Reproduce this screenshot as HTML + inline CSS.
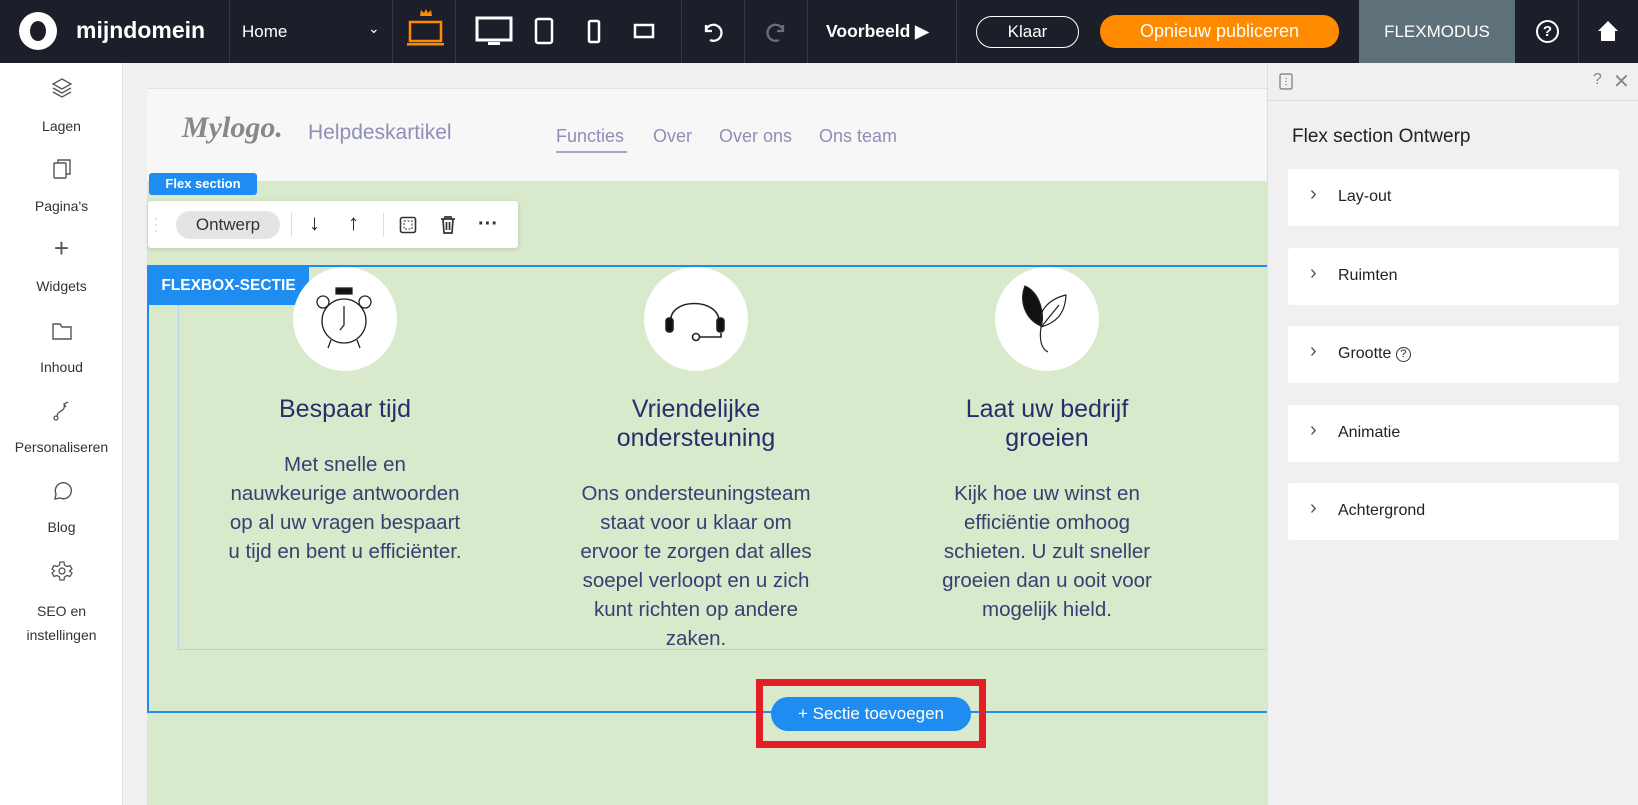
<!DOCTYPE html>
<html><head><meta charset="utf-8"><style>
*{box-sizing:border-box;margin:0;padding:0}
body{width:1638px;height:805px;overflow:hidden;font-family:"Liberation Sans",sans-serif;background:#f1f1f1;position:relative}
.abs{position:absolute}
#top{left:0;top:0;width:1638px;height:63px;background:#1c1f29;color:#fff}
.div{position:absolute;top:0;width:1px;height:63px;background:#333846}
#side{left:0;top:63px;width:123px;height:742px;background:#fff;border-right:1px solid #e2e2e2}
.si{position:absolute;width:123px;text-align:center;font-size:14px;color:#333}
.page{left:147px;top:88px;width:1120px;height:717px;background:#d8e9cc}
.hdr{left:147px;top:88px;width:1120px;height:93px;background:#f7f7f7;border-top:1px solid #e4e4e4}
.nav{font-size:18px;color:#8e8eb8}
.col{position:absolute;width:300px;text-align:center;color:#2b2f6e}
.col h2{font-weight:normal;font-size:25px;line-height:29px;color:#282d6b}
.col p{font-size:20.5px;line-height:29px;color:#3a3e70;margin-top:26px}
.circ{position:absolute;width:104px;height:104px;border-radius:50%;background:#fff;top:267px}
#panel{left:1267px;top:63px;width:371px;height:742px;background:#f0f0f0;border-left:1px solid #ddd}
.card{position:absolute;left:20px;width:331px;height:57px;background:#fff;border-radius:3px;font-size:16px;color:#222;padding:19px 0 0 50px}
.card:before{content:"›";position:absolute;left:22px;top:14px;font-size:20px;color:#555}
</style></head><body>
<div id="top" class="abs">
 <div class="abs" style="left:19px;top:12px;width:38px;height:38px;border-radius:50%;background:#fff"></div>
 <div class="abs" style="left:30px;top:21px;width:16px;height:20px;border-radius:50%;background:#1c1f29"></div>
 <div class="abs" style="left:76px;top:17px;font-size:23px;font-weight:bold">mijndomein</div>
 <div class="div" style="left:229px"></div>
 <div class="abs" style="left:242px;top:22px;font-size:17px">Home</div>
 <div class="abs" style="left:368px;top:20px;font-size:14px">&#8964;</div>
 <div class="div" style="left:392px"></div>
 <svg class="abs" style="left:405px;top:8px" width="40" height="38" viewBox="0 0 40 38"><path d="M15 8 L16 2 L19 5 L21 1 L23 5 L26 2 L27 8Z" fill="#ff8a00"/><rect x="5" y="14" width="31" height="19" fill="none" stroke="#ff8a00" stroke-width="2.5"/><rect x="2" y="35" width="37" height="2.5" fill="#ff8a00"/></svg>
 <div class="div" style="left:455px"></div>
 <svg class="abs" style="left:475px;top:16px" width="38" height="32"><rect x="2" y="2" width="34" height="22" fill="none" stroke="#fff" stroke-width="3"/><rect x="13" y="26" width="12" height="3" fill="#fff"/></svg>
 <svg class="abs" style="left:534px;top:17px" width="20" height="28"><rect x="2" y="2" width="16" height="24" rx="2" fill="none" stroke="#fff" stroke-width="2.5"/></svg>
 <svg class="abs" style="left:587px;top:19px" width="14" height="26"><rect x="2" y="2" width="10" height="21" rx="1.5" fill="none" stroke="#fff" stroke-width="2.5"/></svg>
 <svg class="abs" style="left:633px;top:23px" width="22" height="16"><rect x="2" y="2" width="18" height="12" fill="none" stroke="#fff" stroke-width="2.5"/></svg>
 <div class="div" style="left:681px"></div>
 <svg class="abs" style="left:700px;top:20px" width="24" height="24" viewBox="0 0 24 24"><path d="M6 5 L6 11 L12 11 M6 10 A8 8 0 1 1 10 20" fill="none" stroke="#fff" stroke-width="2.3"/></svg>
 <div class="div" style="left:744px"></div>
 <svg class="abs" style="left:765px;top:20px" width="24" height="24" viewBox="0 0 24 24"><path d="M18 5 L18 11 L12 11 M18 10 A8 8 0 1 0 14 20" fill="none" stroke="#6b6f78" stroke-width="2.3"/></svg>
 <div class="div" style="left:807px"></div>
 <div class="abs" style="left:826px;top:21px;font-size:17.5px;font-weight:bold">Voorbeeld ▶</div>
 <div class="div" style="left:956px"></div>
 <div class="abs" style="left:976px;top:16px;width:103px;height:32px;border:1.5px solid #fff;border-radius:16px;text-align:center;font-size:17px;line-height:29px">Klaar</div>
 <div class="abs" style="left:1100px;top:15px;width:239px;height:33px;background:#ff8a00;border-radius:16px;text-align:center;font-size:18px;line-height:33px">Opnieuw publiceren</div>
 <div class="abs" style="left:1359px;top:0;width:156px;height:63px;background:#5f7178;text-align:center;font-size:17px;line-height:63px">FLEXMODUS</div>
 <div class="abs" style="left:1536px;top:20px;width:23px;height:23px;border:2px solid #fff;border-radius:50%;text-align:center;font-size:15px;line-height:19px;font-weight:bold">?</div>
 <div class="div" style="left:1578px"></div>
 <svg class="abs" style="left:1597px;top:20px" width="22" height="22"><path d="M11 1 L21 11 L18 11 L18 21 L4 21 L4 11 L1 11Z" fill="#fff"/></svg>
</div>

<div id="side" class="abs">
 <svg class="abs" style="left:51px;top:14px" width="22" height="22" viewBox="0 0 22 22" fill="none" stroke="#555" stroke-width="1.3"><path d="M11 2 L20 7 L11 12 L2 7Z"/><path d="M2 11 L11 16 L20 11"/><path d="M2 15 L11 20 L20 15"/></svg>
 <div class="si" style="top:55px">Lagen</div>
 <svg class="abs" style="left:52px;top:95px" width="20" height="22" fill="none" stroke="#555" stroke-width="1.4"><rect x="2" y="5" width="12" height="15" rx="1"/><path d="M6 5 V2 H18 V16 H14"/></svg>
 <div class="si" style="top:135px">Pagina's</div>
 <div class="si" style="top:170px;font-size:26px;color:#555;font-weight:lighter">+</div>
 <div class="si" style="top:215px">Widgets</div>
 <svg class="abs" style="left:51px;top:258px" width="22" height="20" fill="none" stroke="#555" stroke-width="1.4"><path d="M2 3 H9 L11 6 H20 V18 H2Z"/></svg>
 <div class="si" style="top:296px">Inhoud</div>
 <svg class="abs" style="left:52px;top:336px" width="20" height="22" fill="none" stroke="#555" stroke-width="1.3"><path d="M5 18 C5 10 14 14 12 5 L16 3 M12 5 L14 8"/><circle cx="4" cy="19" r="2"/></svg>
 <div class="si" style="top:376px">Personaliseren</div>
 <svg class="abs" style="left:51px;top:417px" width="22" height="22" fill="none" stroke="#555" stroke-width="1.4"><path d="M4 19 L5 14 A8 8 0 1 1 9 18Z"/></svg>
 <div class="si" style="top:456px">Blog</div>
 <svg class="abs" style="left:51px;top:497px" width="22" height="22" fill="none" stroke="#555" stroke-width="1.3" viewBox="0 0 22 22"><circle cx="11" cy="11" r="3"/><path d="M9 2 H13 L13.5 5 L16 6.5 L19 5.5 L21 9 L18.5 11 L21 13 L19 16.5 L16 15.5 L13.5 17 L13 20 H9 L8.5 17 L6 15.5 L3 16.5 L1 13 L3.5 11 L1 9 L3 5.5 L6 6.5 L8.5 5Z"/></svg>
 <div class="si" style="top:536px;line-height:24px">SEO en<br>instellingen</div>
</div>

<div class="abs page"></div>
<div class="abs hdr">
 <div class="abs" style="left:35px;top:22px;font-family:'Liberation Serif',serif;font-style:italic;font-size:30px;color:#888;font-weight:bold">Mylogo.</div>
 <div class="abs" style="left:161px;top:32px;font-size:21px;color:#8e8eb8">Helpdeskartikel</div>
 <div class="abs nav" style="left:409px;top:37px">Functies</div>
 <div class="abs" style="left:409px;top:62px;width:71px;height:2px;background:#a4a4c8"></div>
 <div class="abs nav" style="left:506px;top:37px">Over</div>
 <div class="abs nav" style="left:572px;top:37px">Over ons</div>
 <div class="abs nav" style="left:672px;top:37px">Ons team</div>
</div>

<div class="abs" style="left:147px;top:265px;width:1121px;height:448px;border:2px solid #1e8cf0;border-right:none"></div>
<div class="abs" style="left:178px;top:266px;width:1090px;height:384px;border-left:1px solid #b6d2ec;border-bottom:1px solid #b6d2ec"></div>

<div class="abs" style="left:149px;top:173px;width:108px;height:22px;background:#1e8cf0;color:#fff;border-radius:3px;font-size:13px;font-weight:bold;line-height:22px;text-align:center">Flex section</div>
<div class="abs" style="left:148px;top:201px;width:370px;height:47px;background:#fff;border-radius:3px;box-shadow:0 1px 4px rgba(0,0,0,.15)">
 <div class="abs" style="left:6px;top:14px;color:#bbb;font-size:12px;line-height:6px">·<br>·<br>·</div>
 <div class="abs" style="left:28px;top:10px;width:104px;height:28px;background:#e2e4e6;border-radius:14px;text-align:center;font-size:17px;line-height:28px;color:#333">Ontwerp</div>
 <div class="abs" style="left:143px;top:12px;width:1px;height:24px;background:#ddd"></div>
 <div class="abs" style="left:161px;top:9px;font-size:22px;color:#222">↓</div>
 <div class="abs" style="left:200px;top:9px;font-size:22px;color:#222">↑</div>
 <div class="abs" style="left:235px;top:12px;width:1px;height:24px;background:#ddd"></div>
 <svg class="abs" style="left:251px;top:15px" width="18" height="18" fill="none" stroke="#333" stroke-width="1.6"><rect x="1.5" y="1.5" width="15" height="15" rx="2"/><rect x="5" y="5" width="8" height="8" stroke-dasharray="2 1.5" stroke-width="1"/></svg>
 <svg class="abs" style="left:292px;top:14px" width="16" height="19" fill="none" stroke="#333" stroke-width="1.7"><path d="M1 4 H15 M5 4 V2 H11 V4 M3 4 L4 18 H12 L13 4 M6.5 7 V15 M9.5 7 V15"/></svg>
 <div class="abs" style="left:330px;top:12px;font-size:20px;color:#333;font-weight:bold">···</div>
</div>
<div class="abs" style="left:148px;top:266px;width:161px;height:39px;background:#1e8cf0;color:#fff;font-size:15.5px;font-weight:bold;line-height:39px;text-align:center">FLEXBOX-SECTIE</div>

<div class="circ" style="left:293px"></div>
<svg class="abs" style="left:313px;top:285px" width="64" height="70" fill="none" stroke="#222" stroke-width="1.3"><rect x="23" y="3" width="16" height="6" fill="#111"/><circle cx="31" cy="36" r="22"/><circle cx="10" cy="17" r="6"/><circle cx="52" cy="17" r="6"/><path d="M31 21 V40 L27 45 M18 55 L15 63 M44 55 L47 63"/></svg>
<div class="circ" style="left:644px"></div>
<svg class="abs" style="left:663px;top:291px" width="66" height="56" fill="none" stroke="#222" stroke-width="1.6"><path d="M8 32 C4 6 58 6 56 32"/><rect x="3" y="27" width="7" height="14" rx="3" fill="#111"/><rect x="54" y="27" width="7" height="14" rx="3" fill="#111"/><path d="M58 42 V46 H37"/><circle cx="33" cy="46" r="3.5"/></svg>
<div class="circ" style="left:995px"></div>
<svg class="abs" style="left:1015px;top:283px" width="66" height="76" fill="none" stroke="#222" stroke-width="1.2"><path d="M10 3 C26 10 30 34 26 43 C10 36 4 18 10 3Z" fill="#111"/><path d="M26 44 C22 28 34 16 51 12 C50 32 40 40 26 44 M27 43 L44 22 M26 44 C24 58 27 66 33 69"/></svg>

<div class="col" style="left:195px;top:395px"><h2>Bespaar tijd</h2><p>Met snelle en<br>nauwkeurige antwoorden<br>op al uw vragen bespaart<br>u tijd en bent u efficiënter.</p></div>
<div class="col" style="left:546px;top:395px"><h2>Vriendelijke<br>ondersteuning</h2><p>Ons ondersteuningsteam<br>staat voor u klaar om<br>ervoor te zorgen dat alles<br>soepel verloopt en u zich<br>kunt richten op andere<br>zaken.</p></div>
<div class="col" style="left:897px;top:395px"><h2>Laat uw bedrijf<br>groeien</h2><p>Kijk hoe uw winst en<br>efficiëntie omhoog<br>schieten. U zult sneller<br>groeien dan u ooit voor<br>mogelijk hield.</p></div>

<div class="abs" style="left:756px;top:679px;width:230px;height:69px;border:7px solid #e31e24"></div>
<div class="abs" style="left:771px;top:697px;width:200px;height:34px;background:#1e8cf0;border-radius:17px;color:#fff;font-size:17px;line-height:34px;text-align:center">+ Sectie toevoegen</div>

<div id="panel" class="abs">
 <div class="abs" style="left:0;top:0;width:371px;height:38px;border-bottom:1px solid #ddd"></div>
 <svg class="abs" style="left:11px;top:10px" width="14" height="17" fill="none" stroke="#777" stroke-width="1.2"><rect x="1" y="1" width="12" height="15" rx="1.5"/><path d="M7 5 V6 M7 8 V9 M7 11 V12"/></svg>
 <div class="abs" style="left:325px;top:8px;font-size:16px;color:#888">?</div>
 <div class="abs" style="left:345px;top:6px;font-size:20px;color:#888">✕</div>
 <div class="abs" style="left:24px;top:63px;font-size:19px;color:#222">Flex section Ontwerp</div>
 <div class="card" style="top:106px">Lay-out</div>
 <div class="card" style="top:185px">Ruimten</div>
 <div class="card" style="top:263px">Grootte <span style="display:inline-block;width:15px;height:15px;border:1.5px solid #333;border-radius:50%;font-size:11px;text-align:center;line-height:12px;vertical-align:1px">?</span></div>
 <div class="card" style="top:342px">Animatie</div>
 <div class="card" style="top:420px">Achtergrond</div>
</div>
</body></html>
